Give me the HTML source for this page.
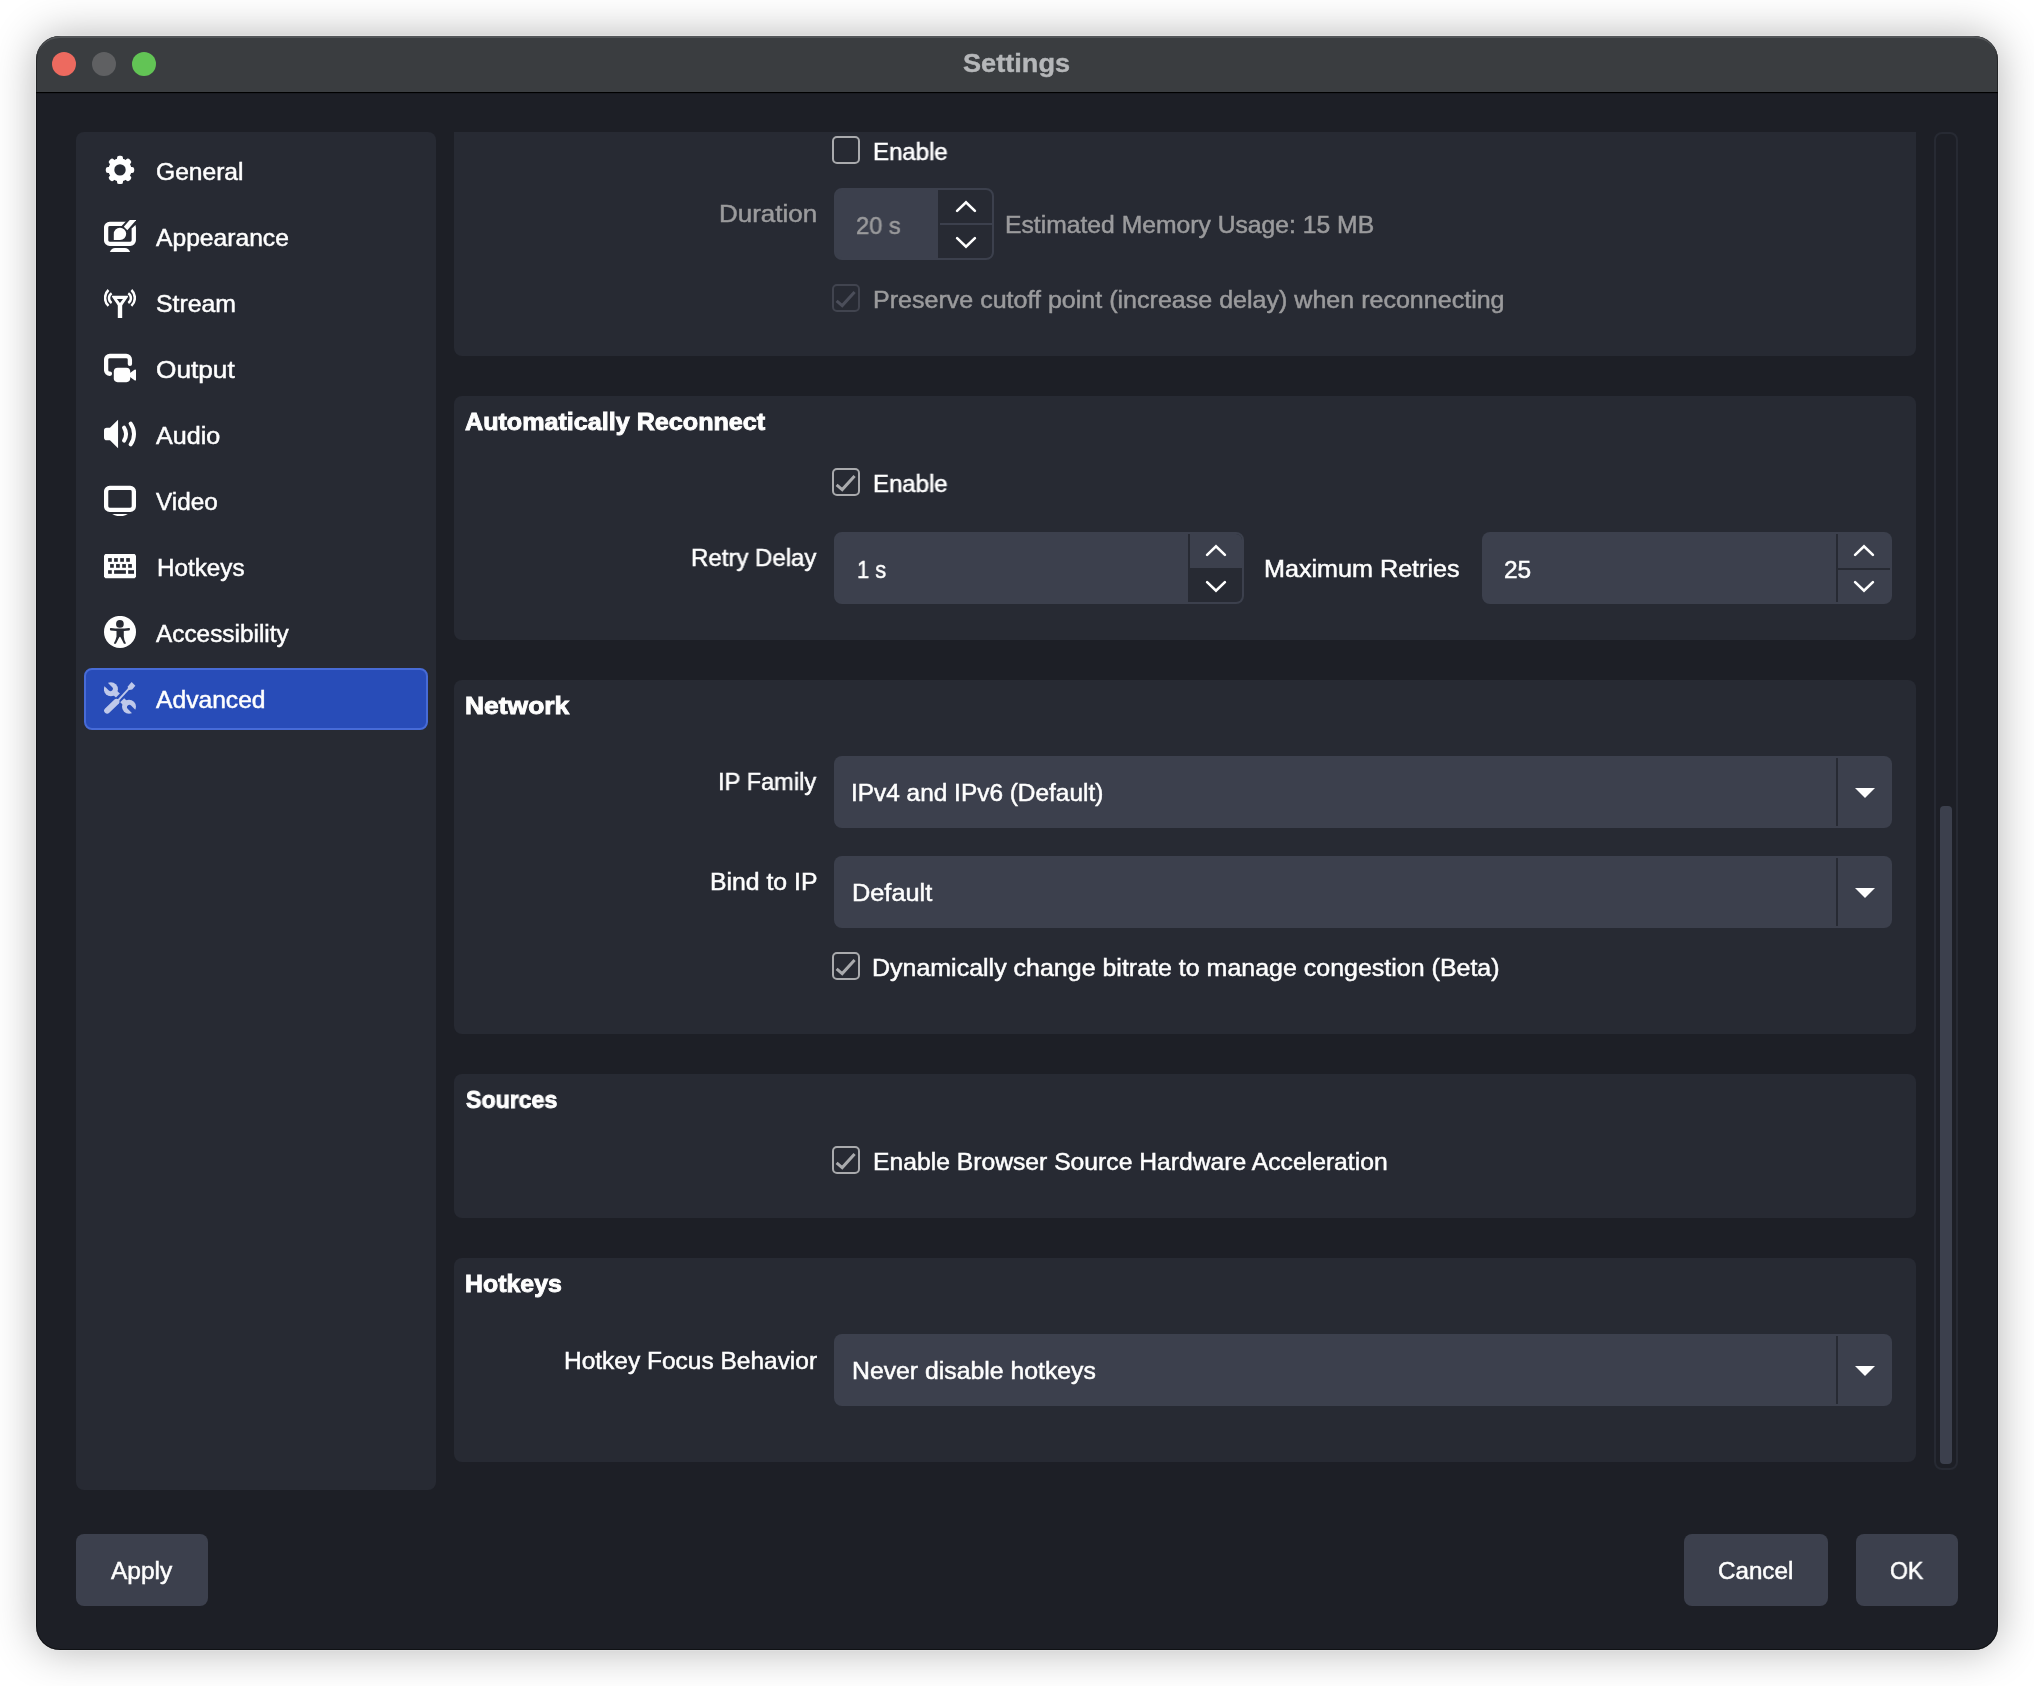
<!DOCTYPE html>
<html lang="en">
<head>
<meta charset="utf-8">
<title>Settings</title>
<style>
html,body{margin:0;padding:0;background:#fff;}
body{width:2034px;height:1686px;position:relative;overflow:hidden;font-family:"Liberation Sans", sans-serif;}
div,span,svg{position:absolute;box-sizing:border-box;}
nav,main,section,footer{display:block;position:static;margin:0;padding:0;}
.win{left:36px;top:36px;width:1962px;height:1614px;border-radius:24px;background:#1d1f26;
  box-shadow:0 0 0 1px rgba(235,235,235,.4),0 0 44px rgba(0,0,0,.30);overflow:hidden;}
.winedge{left:36px;top:36px;width:1962px;height:1614px;border-radius:24px;box-shadow:inset 0 2px 0 rgba(255,255,255,.125),inset 1px 0 0 rgba(0,0,0,.4),inset -1px 0 0 rgba(0,0,0,.4),inset 0 -1px 0 rgba(0,0,0,.45);pointer-events:none;}
.titlebar{left:0;top:0;width:1962px;height:56px;background:#3a3d40;}
.tbline{left:0;top:56px;width:1962px;height:2px;background:linear-gradient(#000 0,#000 50%,#181a20 50%,#181a20 100%);}
.dot{width:24px;height:24px;border-radius:50%;top:52px;}
.tx{white-space:nowrap;font-weight:400;will-change:transform;transform-origin:0 0;}
.tx.b{font-weight:700;}
.side{left:76px;top:132px;width:360px;height:1358px;border-radius:8px;background:#272a33;}
.sel{left:84px;top:668px;width:344px;height:62px;border-radius:8px;background:#284cb8;border:2px solid #476bd7;}
.grp{left:454px;width:1462px;background:#272a33;border-radius:8px;}
.field{background:#3c404d;border-radius:8px;}
.vdiv{width:2px;background:#272a33;}
.cb{width:28px;height:28px;border:2px solid #a9aaad;border-radius:5px;background:transparent;}
.btn{background:#3c404d;border-radius:8px;top:1534px;height:72px;}
.track{left:1934px;top:132px;width:24px;height:1338px;border:2px solid #272a33;border-radius:8px;}
.thumb{left:1940px;top:806px;width:12px;height:658px;border-radius:4px;background:#3c404d;}
.ar{position:absolute;}
</style>
</head>
<body>
<div class="win">
  <div class="titlebar"></div>
  <div class="tbline"></div>
</div>
<div class="winedge"></div>
<div class="dot" style="left:52px;background:#ed6a5f"></div>
<div class="dot" style="left:92px;background:#5f6062"></div>
<div class="dot" style="left:132px;background:#62c455"></div>
<span id="t-title" class="tx b" style="left:963.21px;top:48.00px;font-size:26px;line-height:30px;transform:scaleX(1.0438);-webkit-text-stroke:0.4px #b5b7b9;color:#b5b7b9">Settings</span>

<!-- sidebar -->
<nav aria-label="Settings categories">
<div class="side"></div>
<div class="sel"></div>
<svg class="ic" style="left:104px;top:154px" width="32" height="32" viewBox="0 0 32 32" fill="#fefefe" opacity="1"><g transform="translate(0,0)"><rect x="13" y="1.7" width="6" height="8" rx="2.2" transform="rotate(0 16 15.9)"/><rect x="13" y="1.7" width="6" height="8" rx="2.2" transform="rotate(45 16 15.9)"/><rect x="13" y="1.7" width="6" height="8" rx="2.2" transform="rotate(90 16 15.9)"/><rect x="13" y="1.7" width="6" height="8" rx="2.2" transform="rotate(135 16 15.9)"/><rect x="13" y="1.7" width="6" height="8" rx="2.2" transform="rotate(180 16 15.9)"/><rect x="13" y="1.7" width="6" height="8" rx="2.2" transform="rotate(225 16 15.9)"/><rect x="13" y="1.7" width="6" height="8" rx="2.2" transform="rotate(270 16 15.9)"/><rect x="13" y="1.7" width="6" height="8" rx="2.2" transform="rotate(315 16 15.9)"/><circle cx="16" cy="15.9" r="8.6" fill="none" stroke="#fefefe" stroke-width="5.8"/></g>
</svg><span id="t-general" class="tx" style="left:156.04px;top:158.00px;font-size:24.2px;line-height:27px;transform:scaleX(1.0169);-webkit-text-stroke:0.5px #fefefe;color:#fefefe">General</span>
<svg class="ic" style="left:104px;top:220px" width="32" height="32" viewBox="0 0 32 32" fill="#fefefe" opacity="1"><rect x="2.1" y="3.95" width="27.7" height="19.85" rx="3.6" fill="none" stroke="#fefefe" stroke-width="4.3"/>
<path d="M17.6 6.1 L21.6 1.8 L23.7 -0.5 H34 V2.56 L27.9 8.2 Z" fill="#272a33"/>
<path d="M25.9 -0.2 H32.4 L23.3 10.2 L19.8 6.7 Z"/>
<path d="M9.8 20.1 V14 A6.2 6.2 0 1 1 16 20.1 Z"/>
<path d="M5.8 32.1 Q7.6 28 11 28 H21 Q24.4 28 26.2 32.1 Z"/>
</svg><span id="t-appearance" class="tx" style="left:156.05px;top:224.00px;font-size:24.2px;line-height:27px;transform:scaleX(1.0184);-webkit-text-stroke:0.5px #fefefe;color:#fefefe">Appearance</span>
<svg class="ic" style="left:104px;top:286px" width="32" height="32" viewBox="0 0 32 32" fill="#fefefe" opacity="1"><rect x="13.8" y="17.6" width="4.4" height="14.5"/>
<path d="M8.6 9.8 H23.4 Q24.6 9.8 23.9 10.9 L18.2 19.2 H13.8 L8.1 10.9 Q7.4 9.8 8.6 9.8 Z M12.9 13.1 L15.95 16.9 L19 13.1 Z" fill-rule="evenodd"/>
<g fill="none" stroke="#fefefe" stroke-width="2.5">
<path d="M7.6 7.2 A5.9 5.9 0 0 0 7.6 17"/>
<path d="M4.5 4 A10.9 10.9 0 0 0 4.5 19.9"/>
<path d="M24.3 7.2 A5.9 5.9 0 0 1 24.3 17"/>
<path d="M27.4 4 A10.9 10.9 0 0 1 27.4 19.9"/>
</g>
</svg><span id="t-stream" class="tx" style="left:155.63px;top:290.00px;font-size:24.2px;line-height:27px;transform:scaleX(1.0261);-webkit-text-stroke:0.5px #fefefe;color:#fefefe">Stream</span>
<svg class="ic" style="left:104px;top:352px" width="32" height="32" viewBox="0 0 32 32" fill="#fefefe" opacity="1"><path d="M25.9 11.9 V7.7 A3.7 3.7 0 0 0 22.2 4 H5.8 A3.7 3.7 0 0 0 2.1 7.7 V18.05 A3.7 3.7 0 0 0 5.8 21.75 H5.95" fill="none" stroke="#fefefe" stroke-width="4.3" stroke-linecap="round"/>
<rect x="9.8" y="15.8" width="16.4" height="14.35" rx="3.8"/>
<path d="M25.6 21.2 L30.5 17.7 Q32.1 16.9 32.1 18.7 V27.3 Q32.1 29.1 30.5 28.3 L25.6 24.8 Z"/>
</svg><span id="t-output" class="tx" style="left:155.99px;top:356.00px;font-size:24.2px;line-height:27px;transform:scaleX(1.0844);-webkit-text-stroke:0.5px #fefefe;color:#fefefe">Output</span>
<svg class="ic" style="left:104px;top:418px" width="32" height="32" viewBox="0 0 32 32" fill="#fefefe" opacity="1"><path d="M14.06 1.8 V30.15 L5.95 22.2 H2.8 A2.8 2.8 0 0 1 0 19.4 V12.6 A2.8 2.8 0 0 1 2.8 9.8 H5.95 Z"/>
<g fill="none" stroke="#fefefe" stroke-width="4" stroke-linecap="round">
<path d="M20.04 9.65 A12.1 12.1 0 0 1 20.04 22.6"/>
<path d="M26.7 5.67 A18 18 0 0 1 26.7 26.45"/>
</g>
</svg><span id="t-audio" class="tx" style="left:156.06px;top:422.00px;font-size:24.2px;line-height:27px;transform:scaleX(1.0386);-webkit-text-stroke:0.5px #fefefe;color:#fefefe">Audio</span>
<svg class="ic" style="left:104px;top:484px" width="32" height="32" viewBox="0 0 32 32" fill="#fefefe" opacity="1"><rect x="2.1" y="3.95" width="27.75" height="21.95" rx="3.6" fill="none" stroke="#fefefe" stroke-width="4.3"/>
<path d="M8.2 30 H23.9 Q16 34.6 8.2 30 Z"/>
</svg><span id="t-video" class="tx" style="left:156.05px;top:488.00px;font-size:24.2px;line-height:27px;transform:scaleX(1.0037);-webkit-text-stroke:0.5px #fefefe;color:#fefefe">Video</span>
<svg class="ic" style="left:104px;top:550px" width="32" height="32" viewBox="0 0 32 32" fill="#fefefe" opacity="1"><path d="M1.4 3.96 H30.6 L32 5.4 V26.7 L30.6 28.15 H1.4 L0 26.7 V5.4 Z"/><rect x="4.1" y="8.1" width="3.7" height="3.7" fill="#272a33"/><rect x="10.1" y="8.1" width="3.7" height="3.7" fill="#272a33"/><rect x="16.2" y="8.1" width="3.7" height="3.7" fill="#272a33"/><rect x="22.2" y="8.1" width="3.7" height="3.7" fill="#272a33"/><rect x="6.1" y="14.06" width="3.7" height="3.7" fill="#272a33"/><rect x="12.07" y="14.06" width="3.7" height="3.7" fill="#272a33"/><rect x="18.2" y="14.06" width="3.7" height="3.7" fill="#272a33"/><rect x="24.17" y="14.06" width="3.7" height="3.7" fill="#272a33"/><rect x="4.1" y="20.2" width="3.7" height="3.6" fill="#272a33"/><rect x="10.1" y="20.2" width="11.8" height="3.6" fill="#272a33"/><rect x="24.17" y="20.2" width="5.85" height="3.6" fill="#272a33"/>
</svg><span id="t-hotkeys" class="tx" style="left:156.55px;top:554.00px;font-size:24.2px;line-height:27px;transform:scaleX(1.0014);-webkit-text-stroke:0.5px #fefefe;color:#fefefe">Hotkeys</span>
<svg class="ic" style="left:104px;top:616px" width="32" height="32" viewBox="0 0 32 32" fill="#fefefe" opacity="1"><circle cx="16" cy="15.9" r="16"/>
<g fill="#272a33"><circle cx="15.9" cy="7.94" r="3.85"/>
<path d="M5.95 12.6 Q5.95 11.9 6.8 11.95 Q16 13.2 25.1 11.95 Q25.9 11.9 25.9 12.6 V13.6 Q25.9 14.3 25.2 14.4 L19.8 15.1 V20.5 Q20 24 21.8 27.1 Q22.1 27.8 21.4 27.8 H20.5 Q20 27.8 19.8 27.4 L16.7 21.4 Q15.9 20.2 15.1 21.4 L12 27.4 Q11.8 27.8 11.3 27.8 H10.4 Q9.7 27.8 10 27.1 Q11.8 24 12.5 20.5 V15.1 L6.6 14.4 Q5.95 14.3 5.95 13.6 Z"/></g>
</svg><span id="t-access" class="tx" style="left:156.05px;top:620.00px;font-size:24.2px;line-height:27px;transform:scaleX(1.0073);-webkit-text-stroke:0.5px #fefefe;color:#fefefe">Accessibility</span>
<svg class="ic" style="left:104px;top:682px" width="32" height="32" viewBox="0 0 32 32" fill="#fefefe" opacity="1"><circle cx="6.9" cy="7.2" r="7.0" fill="#bfc9ea"/><path d="M4.92 9.18 L11.92 15.58 L15.88 11.62 L8.88 5.22 Z" fill="#bfc9ea"/><path d="M4.85 8.54 L-1.16 2.53 L2.23 -0.86 L8.24 5.15 A2.4 2.4 0 0 1 4.85 8.54 Z" fill="#284cb8"/><circle cx="25" cy="24.8" r="7.0" fill="#bfc9ea"/><path d="M26.98 22.82 L20.18 16.22 L16.22 20.18 L23.02 26.78 Z" fill="#bfc9ea"/><path d="M27.05 23.46 L33.06 29.47 L29.67 32.86 L23.66 26.85 A2.4 2.4 0 0 1 27.05 23.46 Z" fill="#284cb8"/><path d="M3.2 28.6 L12.3 19.9" stroke="#bfc9ea" stroke-width="6.1" stroke-linecap="round" fill="none"/><path d="M10.4 18.0 L14.3 21.9 L15.4 18.6 L13.6 16.9 Z" fill="#bfc9ea"/><path d="M13.6 18.8 L24.9 6.6" stroke="#bfc9ea" stroke-width="1.9" fill="none"/><path d="M24.0 4.3 L27.6 0.1 L31.4 3.7 L28.2 7.5 L25.4 8.1 L23.8 6.6 Z" fill="#bfc9ea"/>
</svg><span id="t-advanced" class="tx" style="left:156.05px;top:686.00px;font-size:24.2px;line-height:27px;transform:scaleX(1.0185);-webkit-text-stroke:0.5px #fefefe;color:#fefefe">Advanced</span>
</nav>

<main>

<!-- group 1: stream delay (scrolled, clipped at top) -->
<section>
<div class="grp" style="top:132px;height:224px;border-radius:0 0 8px 8px"></div>
<div class="cb" style="left:832px;top:136px;border-color:#a9aaad"></div><span id="t-en1" class="tx" style="left:872.76px;top:138.00px;font-size:24.2px;line-height:27px;transform:scaleX(0.9924);-webkit-text-stroke:0.5px #fefefe;color:#fefefe">Enable</span>
<span id="t-duration" class="tx" style="left:718.70px;top:200.00px;font-size:24.2px;line-height:27px;transform:scaleX(1.0730);-webkit-text-stroke:0.5px #9b9b9d;color:#9b9b9d">Duration</span>
<div class="field" style="left:834px;top:188px;width:160px;height:72px;border:2px solid #3c404d;background:#3c404d;overflow:hidden">
  <div style="left:102px;top:0;width:54px;height:68px;background:#272a33"></div>
  <div style="left:104px;top:33px;width:52px;height:2px;background:#3c404d"></div>
  <div style="left:119px;top:9.7px;width:22px;height:13px"><svg class="ar" width="22" height="13" viewBox="0 0 22 13"><path d="M2.1 10.9 L11 2.2 L19.9 10.9" fill="none" stroke="#fefefe" stroke-width="2.6" stroke-linecap="round" stroke-linejoin="miter"/></svg></div>
  <div style="left:119px;top:45.5px;width:22px;height:13px"><svg class="ar" width="22" height="13" viewBox="0 0 22 13"><path d="M2.1 2.1 L11 10.8 L19.9 2.1" fill="none" stroke="#fefefe" stroke-width="2.6" stroke-linecap="round" stroke-linejoin="miter"/></svg></div>
</div>
<span id="t-20s" class="tx" style="left:855.51px;top:212.00px;font-size:24.2px;line-height:27px;transform:scaleX(0.9806);-webkit-text-stroke:0.5px #9b9b9d;color:#9b9b9d">20 s</span>
<span id="t-est" class="tx" style="left:1004.73px;top:211.00px;font-size:24.2px;line-height:27px;transform:scaleX(1.0209);-webkit-text-stroke:0.5px #9b9b9d;color:#9b9b9d">Estimated Memory Usage: 15 MB</span>
<div class="cb" style="left:832px;top:284px;border-color:#41444f"><svg width="24" height="24" viewBox="0 0 24 24" style="position:absolute;left:0;top:0"><path d="M2.6 14.9 L8.2 19.6 L20.6 5.9" fill="none" stroke="#4b4e5a" stroke-width="3" stroke-linejoin="miter"/></svg></div><span id="t-preserve" class="tx" style="left:872.92px;top:286.00px;font-size:24.2px;line-height:27px;transform:scaleX(1.0354);-webkit-text-stroke:0.5px #9b9b9d;color:#9b9b9d">Preserve cutoff point (increase delay) when reconnecting</span>
</section>

<!-- group 2 -->
<section>
<div class="grp" style="top:396px;height:244px"></div>
<span id="t-ar" class="tx b" style="left:465.47px;top:408.00px;font-size:24.2px;line-height:27px;transform:scaleX(1.0386);-webkit-text-stroke:0.9px #fefefe;color:#fefefe">Automatically Reconnect</span>
<div class="cb" style="left:832px;top:468px;border-color:#a9aaad"><svg width="24" height="24" viewBox="0 0 24 24" style="position:absolute;left:0;top:0"><path d="M2.6 14.9 L8.2 19.6 L20.6 5.9" fill="none" stroke="#a9aaad" stroke-width="3" stroke-linejoin="miter"/></svg></div><span id="t-en2" class="tx" style="left:872.56px;top:470.00px;font-size:24.2px;line-height:27px;transform:scaleX(0.9911);-webkit-text-stroke:0.5px #fefefe;color:#fefefe">Enable</span>
<span id="t-retry" class="tx" style="left:690.51px;top:544.00px;font-size:24.2px;line-height:27px;transform:scaleX(0.9921);-webkit-text-stroke:0.5px #fefefe;color:#fefefe">Retry Delay</span>
<div class="field" style="left:834px;top:532px;width:410px;height:72px;border:2px solid #3c404d;overflow:hidden">
  <div style="left:352px;top:0;width:54px;height:68px;background:#272a33"></div>
  <div style="left:354px;top:0;width:52px;height:34px;background:#3c404d"></div>
  <div style="left:369px;top:9.6px;width:22px;height:13px"><svg class="ar" width="22" height="13" viewBox="0 0 22 13"><path d="M2.1 10.9 L11 2.2 L19.9 10.9" fill="none" stroke="#fefefe" stroke-width="2.6" stroke-linecap="round" stroke-linejoin="miter"/></svg></div>
  <div style="left:369px;top:45.5px;width:22px;height:13px"><svg class="ar" width="22" height="13" viewBox="0 0 22 13"><path d="M2.1 2.1 L11 10.8 L19.9 2.1" fill="none" stroke="#fefefe" stroke-width="2.6" stroke-linecap="round" stroke-linejoin="miter"/></svg></div>
</div>
<span id="t-1s" class="tx" style="left:857.33px;top:556.00px;font-size:24.2px;line-height:27px;transform:scaleX(0.8998);-webkit-text-stroke:0.5px #fefefe;color:#fefefe">1 s</span>
<span id="t-maxr" class="tx" style="left:1264.22px;top:555.00px;font-size:24.2px;line-height:27px;transform:scaleX(1.0397);-webkit-text-stroke:0.5px #fefefe;color:#fefefe">Maximum Retries</span>
<div class="field" style="left:1482px;top:532px;width:410px;height:72px">
  <div class="vdiv" style="left:354px;top:2px;height:68px"></div>
  <div style="left:356px;top:36px;width:52px;height:2px;background:#272a33"></div>
  <div style="left:371px;top:11.6px;width:22px;height:13px"><svg class="ar" width="22" height="13" viewBox="0 0 22 13"><path d="M2.1 10.9 L11 2.2 L19.9 10.9" fill="none" stroke="#fefefe" stroke-width="2.6" stroke-linecap="round" stroke-linejoin="miter"/></svg></div>
  <div style="left:371px;top:47.5px;width:22px;height:13px"><svg class="ar" width="22" height="13" viewBox="0 0 22 13"><path d="M2.1 2.1 L11 10.8 L19.9 2.1" fill="none" stroke="#fefefe" stroke-width="2.6" stroke-linecap="round" stroke-linejoin="miter"/></svg></div>
</div>
<span id="t-25" class="tx" style="left:1503.74px;top:556.00px;font-size:24.2px;line-height:27px;transform:scaleX(1.0115);-webkit-text-stroke:0.5px #fefefe;color:#fefefe">25</span>
</section>

<!-- group 3 -->
<section>
<div class="grp" style="top:680px;height:354px"></div>
<span id="t-network" class="tx b" style="left:465.10px;top:692.00px;font-size:24.2px;line-height:27px;transform:scaleX(1.0931);-webkit-text-stroke:0.9px #fefefe;color:#fefefe">Network</span>
<span id="t-ipfam" class="tx" style="left:717.79px;top:768.00px;font-size:24.2px;line-height:27px;transform:scaleX(0.9781);-webkit-text-stroke:0.5px #fefefe;color:#fefefe">IP Family</span>
<div class="field" style="left:834px;top:756px;width:1058px;height:72px"><div class="vdiv" style="left:1002px;top:2px;height:68px"></div><div style="position:absolute;left:1021px;top:32px"><svg class="tri" width="20" height="10" viewBox="0 0 20 10"><path d="M0 0 H20 L10 10 Z" fill="#fefefe"/></svg></div></div><span id="t-ipv" class="tx" style="left:851.48px;top:779.00px;font-size:24.2px;line-height:27px;transform:scaleX(1.0091);-webkit-text-stroke:0.5px #fefefe;color:#fefefe">IPv4 and IPv6 (Default)</span>
<span id="t-bind" class="tx" style="left:710.48px;top:868.00px;font-size:24.2px;line-height:27px;transform:scaleX(1.0243);-webkit-text-stroke:0.5px #fefefe;color:#fefefe">Bind to IP</span>
<div class="field" style="left:834px;top:856px;width:1058px;height:72px"><div class="vdiv" style="left:1002px;top:2px;height:68px"></div><div style="position:absolute;left:1021px;top:32px"><svg class="tri" width="20" height="10" viewBox="0 0 20 10"><path d="M0 0 H20 L10 10 Z" fill="#fefefe"/></svg></div></div><span id="t-default" class="tx" style="left:852.46px;top:879.00px;font-size:24.2px;line-height:27px;transform:scaleX(1.0469);-webkit-text-stroke:0.5px #fefefe;color:#fefefe">Default</span>
<div class="cb" style="left:832px;top:952px;border-color:#a9aaad"><svg width="24" height="24" viewBox="0 0 24 24" style="position:absolute;left:0;top:0"><path d="M2.6 14.9 L8.2 19.6 L20.6 5.9" fill="none" stroke="#a9aaad" stroke-width="3" stroke-linejoin="miter"/></svg></div><span id="t-dyn" class="tx" style="left:872.48px;top:954.00px;font-size:24.2px;line-height:27px;transform:scaleX(1.0327);-webkit-text-stroke:0.5px #fefefe;color:#fefefe">Dynamically change bitrate to manage congestion (Beta)</span>
</section>

<!-- group 4 -->
<section>
<div class="grp" style="top:1074px;height:144px"></div>
<span id="t-sources" class="tx b" style="left:466.43px;top:1086.00px;font-size:24.2px;line-height:27px;transform:scaleX(0.9567);-webkit-text-stroke:0.9px #fefefe;color:#fefefe">Sources</span>
<div class="cb" style="left:832px;top:1146px;border-color:#a9aaad"><svg width="24" height="24" viewBox="0 0 24 24" style="position:absolute;left:0;top:0"><path d="M2.6 14.9 L8.2 19.6 L20.6 5.9" fill="none" stroke="#a9aaad" stroke-width="3" stroke-linejoin="miter"/></svg></div><span id="t-browser" class="tx" style="left:872.73px;top:1148.00px;font-size:24.2px;line-height:27px;transform:scaleX(1.0208);-webkit-text-stroke:0.5px #fefefe;color:#fefefe">Enable Browser Source Hardware Acceleration</span>
</section>

<!-- group 5 -->
<section>
<div class="grp" style="top:1258px;height:204px"></div>
<span id="t-hk" class="tx b" style="left:465.43px;top:1270.00px;font-size:24.2px;line-height:27px;transform:scaleX(1.0288);-webkit-text-stroke:0.9px #fefefe;color:#fefefe">Hotkeys</span>
<span id="t-hkfb" class="tx" style="left:564.49px;top:1347.00px;font-size:24.2px;line-height:27px;transform:scaleX(1.0121);-webkit-text-stroke:0.5px #fefefe;color:#fefefe">Hotkey Focus Behavior</span>
<div class="field" style="left:834px;top:1334px;width:1058px;height:72px"><div class="vdiv" style="left:1002px;top:2px;height:68px"></div><div style="position:absolute;left:1021px;top:32px"><svg class="tri" width="20" height="10" viewBox="0 0 20 10"><path d="M0 0 H20 L10 10 Z" fill="#fefefe"/></svg></div></div><span id="t-never" class="tx" style="left:852.23px;top:1357.00px;font-size:24.2px;line-height:27px;transform:scaleX(1.0248);-webkit-text-stroke:0.5px #fefefe;color:#fefefe">Never disable hotkeys</span>
</section>

<!-- scrollbar -->
<div class="track"></div>
<div class="thumb"></div>
</main>

<!-- buttons -->
<footer>
<div class="btn" style="left:76px;width:132px"></div><span id="t-apply" class="tx" style="left:110.85px;top:1557.00px;font-size:24.2px;line-height:27px;transform:scaleX(1.0128);-webkit-text-stroke:0.5px #fefefe;color:#fefefe">Apply</span>
<div class="btn" style="left:1684px;width:144px"></div><span id="t-cancel" class="tx" style="left:1718.35px;top:1557.00px;font-size:24.2px;line-height:27px;transform:scaleX(0.9943);-webkit-text-stroke:0.5px #fefefe;color:#fefefe">Cancel</span>
<div class="btn" style="left:1856px;width:102px"></div><span id="t-ok" class="tx" style="left:1889.69px;top:1557.00px;font-size:24.2px;line-height:27px;transform:scaleX(0.9530);-webkit-text-stroke:0.5px #fefefe;color:#fefefe">OK</span>
</footer>
</body>
</html>
